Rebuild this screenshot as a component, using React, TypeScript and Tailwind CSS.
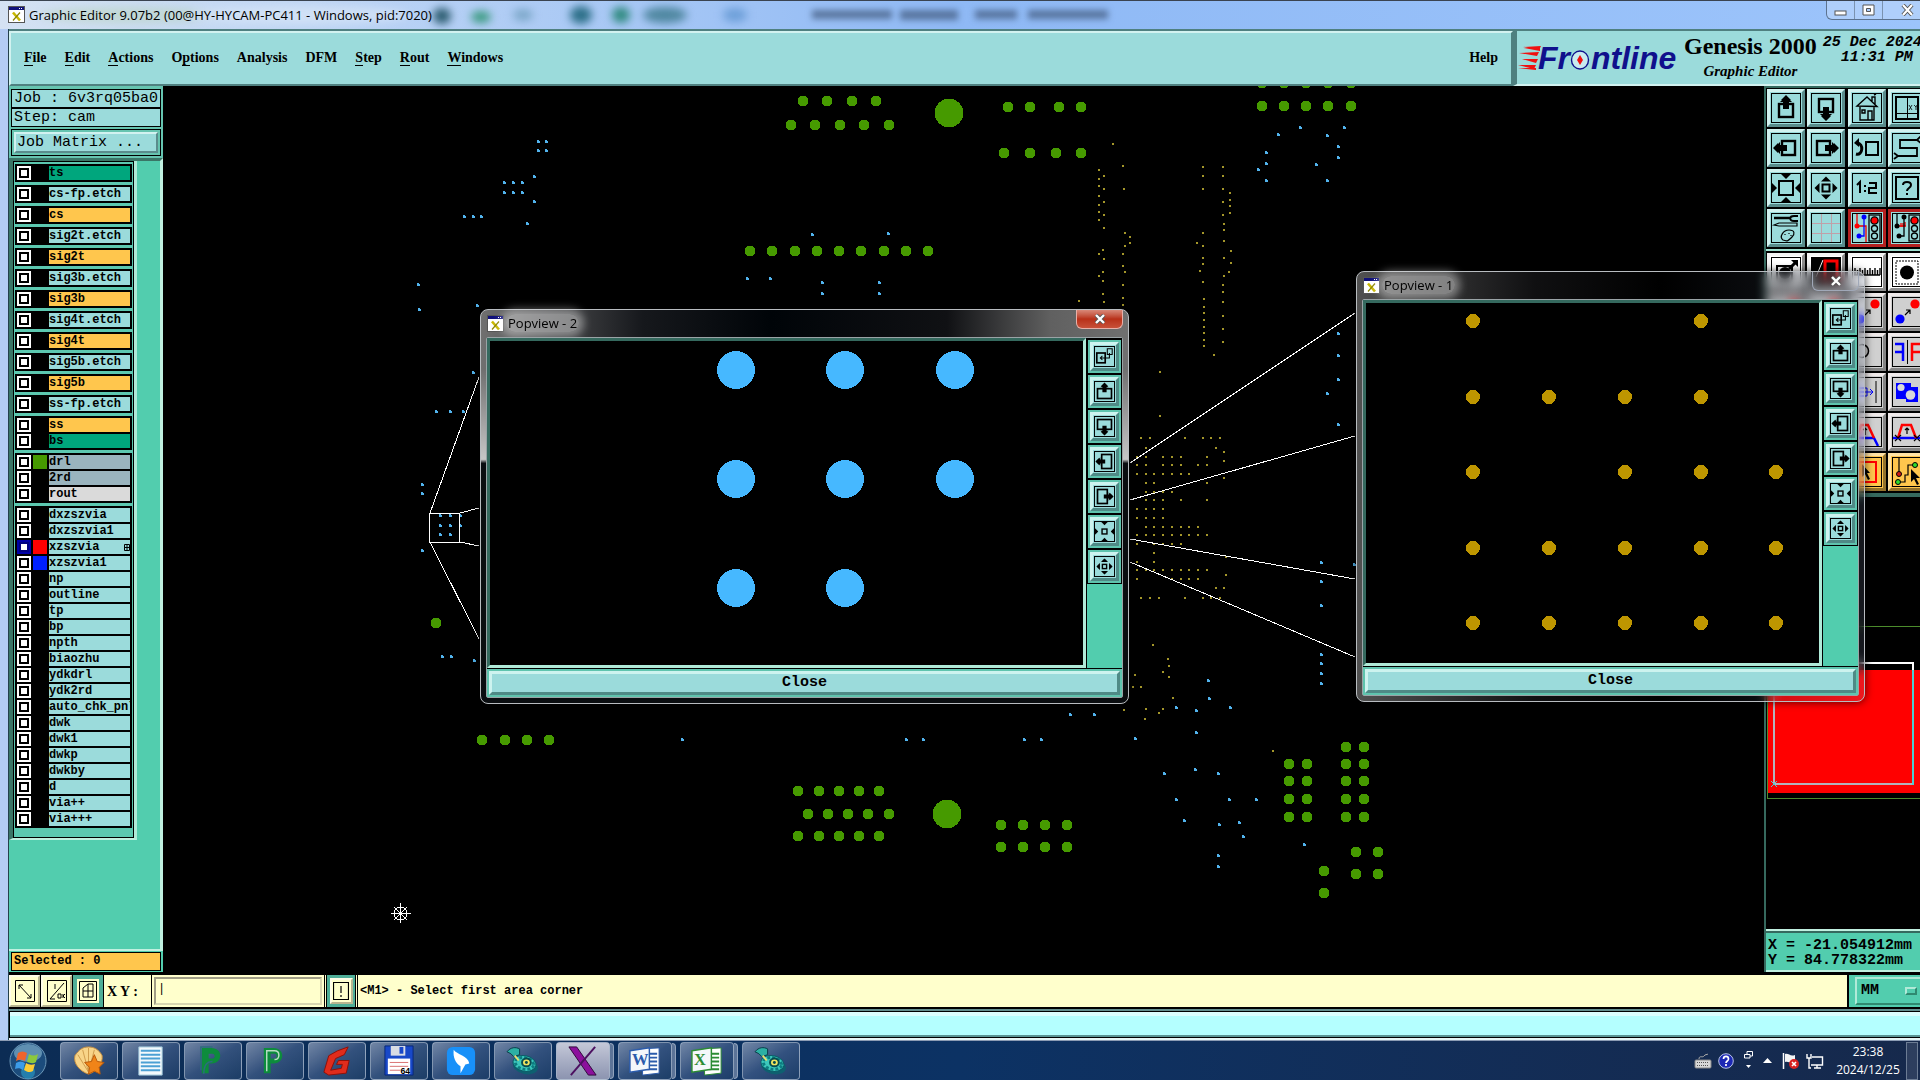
import React from "react";
import clsx from "clsx";

type Point = [number, number];
type Tone = "aqua" | "white" | "grey" | "orange" | "red";

// every entry is [y, ...x] for one row of pads or vias
const greenRows: number[][] = [
  [83, 1262, 1284, 1306, 1328, 1351],
  [101, 803, 827, 852, 876],
  [106, 1262, 1284, 1306, 1328, 1351],
  [107, 1008, 1030, 1059, 1081],
  [125, 791, 815, 840, 864, 889],
  [153, 1004, 1030, 1056, 1081],
  [251, 750, 772, 795, 817, 839, 861, 884, 906, 928],
  [623, 436],
  [740, 482, 505, 527, 549],
  [747, 1346, 1364],
  [764, 1289, 1307, 1346, 1364],
  [781, 1289, 1307, 1346, 1364],
  [799, 1289, 1307, 1346, 1364],
  [817, 1289, 1307, 1346, 1364],
  [791, 798, 819, 839, 859, 879],
  [814, 808, 828, 848, 868, 889],
  [836, 798, 819, 839, 859, 879],
  [825, 1001, 1023, 1045, 1067],
  [847, 1001, 1023, 1045, 1067],
  [852, 1356, 1378],
  [874, 1356, 1378],
  [871, 1324],
  [893, 1324],
];

const blueRows: number[][] = [
  [142, 538, 546], [151, 538, 546], [177, 534], [183, 504, 513, 522], [193, 504, 513, 522],
  [202, 534], [217, 464, 473, 481], [224, 527], [285, 418], [310, 419], [306, 477],
  [235, 812], [234, 888], [279, 747, 770], [283, 822, 879], [294, 822, 879],
  [128, 1300, 1344], [135, 1278], [136, 1327], [147, 1338], [158, 1338], [153, 1266],
  [164, 1266], [170, 1258], [165, 1316], [181, 1266, 1327], [334, 1338], [356, 1338],
  [380, 1338], [394, 1327], [425, 1338], [563, 1321], [565, 1354], [582, 1321],
  [606, 1321], [655, 1321], [664, 1321], [674, 1321], [684, 1321], [681, 1208],
  [699, 1209], [708, 1176, 1230], [711, 1196], [733, 1196], [739, 1135], [774, 1164, 1218],
  [770, 1195], [800, 1176, 1229, 1256], [821, 1184], [825, 1219], [823, 1239], [837, 1243],
  [845, 1304], [856, 1218], [867, 1218], [373, 473], [412, 436, 450, 463], [485, 422],
  [494, 422], [551, 422], [516, 440, 450, 460], [526, 440, 450, 460], [535, 440, 450],
  [657, 442, 451], [661, 474], [740, 682, 906, 923, 1024, 1041], [715, 1070, 1094],
];

const yellowRows: number[][] = [
  [144, 1113], [166, 1123], [170, 1099], [179, 1099], [186, 1099], [196, 1099], [205, 1099],
  [212, 1099], [220, 1099], [254, 1099, 1123], [276, 1099, 1224], [176, 1104, 1203, 1223],
  [189, 1104, 1124, 1203, 1223], [202, 1104, 1223], [215, 1104, 1223], [228, 1104],
  [259, 1104], [302, 1104, 1223], [250, 1103], [272, 1103, 1125, 1229], [281, 1103],
  [294, 1103], [233, 1125, 1203], [246, 1125, 1203], [237, 1130], [243, 1130, 1197],
  [266, 1123], [285, 1123, 1223], [298, 1123], [305, 1123], [301, 1079], [167, 1203, 1223],
  [258, 1203, 1224], [264, 1203], [282, 1203], [271, 1200], [299, 1204], [307, 1204],
  [313, 1204], [320, 1204], [327, 1204], [333, 1204], [340, 1204], [346, 1204], [292, 1223],
  [316, 1223], [329, 1223], [342, 1223], [224, 1224], [230, 1224], [241, 1224], [193, 1230],
  [200, 1230], [206, 1230], [213, 1230], [251, 1231], [263, 1231], [355, 1214], [372, 1160],
  [416, 1160], [438, 1141, 1150, 1185, 1203, 1211, 1220], [448, 1146, 1216], [452, 1224],
  [457, 1137, 1146, 1163, 1172, 1181, 1207], [461, 1224],
  [465, 1137, 1146, 1163, 1172, 1181, 1198, 1207],
  [474, 1137, 1146, 1154, 1163, 1172, 1181, 1189], [478, 1224], [483, 1146, 1154, 1207],
  [492, 1146, 1154, 1163, 1172], [500, 1146, 1154, 1163, 1181, 1207],
  [509, 1137, 1146, 1154, 1163], [518, 1137, 1146, 1154, 1163],
  [527, 1146, 1154, 1163, 1172, 1181, 1189, 1198],
  [535, 1137, 1146, 1154, 1163, 1172, 1181, 1189, 1198, 1207],
  [544, 1137, 1154, 1163, 1172, 1181], [553, 1154], [557, 1226], [562, 1137, 1154],
  [570, 1137, 1146, 1154, 1163, 1172, 1181, 1189, 1198, 1207], [575, 1226],
  [579, 1137, 1172, 1181, 1189, 1198], [588, 1216, 1224],
  [598, 1141, 1150, 1159, 1185, 1203, 1211, 1220], [645, 1153], [659, 1168], [666, 1169],
  [672, 1163], [677, 1169], [675, 1135], [687, 1133, 1141], [698, 1173], [709, 1146, 1163],
  [713, 1159], [719, 1145], [710, 1124], [751, 1273],
];

const spread = (rows: number[][]): Point[] =>
  rows.flatMap(([y, ...xs]) => xs.map((x): Point => [x, y]));

const menus: [string, number][] = [
  ["File", 0],
  ["Edit", 0],
  ["Actions", 0],
  ["Options", 1],
  ["Analysis", -1],
  ["DFM", -1],
  ["Step", 0],
  ["Rout", 0],
  ["Windows", 0],
];

type Layer = { name: string; bg?: string; swatch?: string; active?: boolean };
const green = "bg-[#00a67d]";
const amber = "bg-[#ffc64d]";

const layerGroups: Layer[][] = [
  [{ name: "ts", bg: green }],
  [{ name: "cs-fp.etch" }],
  [{ name: "cs", bg: amber }],
  [{ name: "sig2t.etch" }],
  [{ name: "sig2t", bg: amber }],
  [{ name: "sig3b.etch" }],
  [{ name: "sig3b", bg: amber }],
  [{ name: "sig4t.etch" }],
  [{ name: "sig4t", bg: amber }],
  [{ name: "sig5b.etch" }],
  [{ name: "sig5b", bg: amber }],
  [{ name: "ss-fp.etch" }],
  [{ name: "ss", bg: amber }, { name: "bs", bg: green }],
  [
    { name: "drl", bg: "bg-[#9ab4be]", swatch: "bg-[#469a00]" },
    { name: "2rd", bg: "bg-[#9ab4be]" },
    { name: "rout", bg: "bg-[#dadada]" },
  ],
  [
    { name: "dxzszvia" },
    { name: "dxzszvia1" },
    { name: "xzszvia", swatch: "bg-[#ff0000]", active: true },
    { name: "xzszvia1", swatch: "bg-[#0020ff]" },
    { name: "np" },
    { name: "outline" },
    { name: "tp" },
    { name: "bp" },
    { name: "npth" },
    { name: "biaozhu" },
    { name: "ydkdrl" },
    { name: "ydk2rd" },
    { name: "auto_chk_pnl" },
    { name: "dwk" },
    { name: "dwk1" },
    { name: "dwkp" },
    { name: "dwkby" },
    { name: "d" },
    { name: "via++" },
    { name: "via+++" },
  ],
];

const XLogo = () => (
  <svg width="17" height="17" viewBox="0 0 17 17" className="shrink-0">
    <rect x="0.5" y="0.5" width="16" height="16" fill="#fff" stroke="#555" />
    <rect x="1" y="1" width="15" height="3" fill="#10107a" />
    <path d="M11 2.5h1M13 2.5h1" stroke="#fff" />
    <path d="M5 6.5l7 8" stroke="#c9b800" strokeWidth="2.6" />
    <path d="M12 6.5l-7 8" stroke="#8a8400" strokeWidth="1.2" />
  </svg>
);

// a box with a solid arrow leaving it, turned by `turn` degrees
const PanBox = ({ turn, wide }: { turn: number; wide?: boolean }) => (
  <g transform={`rotate(${turn} 15 15)`}>
    <rect x={wide ? 5 : 8} y="11" width={wide ? 20 : 14} height={wide ? 14 : 13} fill="none" stroke="#000" strokeWidth="2.4" />
    <path d="M15 2l5 5h-1l2 2h-3v7h-6V9H9l2-2h-1z" />
  </g>
);

const Arrows = ({ size, out }: { size: number; out: boolean }) => (
  <>
    <rect x={15 - size / 2} y={15 - size / 2} width={size} height={size} fill="none" stroke="#000" strokeWidth="2" />
    {[0, 90, 180, 270].map((a) => (
      <path key={a} d={out ? "M15 3.5l2 2 3 3h-10l3-3z" : "M10 1h10l-3 3-2 2-2-2z"} transform={`rotate(${a} 15 15)`} />
    ))}
  </>
);

const PopIcon = () => (
  <g fill="none" stroke="#000">
    <rect x="4" y="10" width="12" height="14" strokeWidth="2.4" />
    <path d="M19 4h7v8h-7zM22 10v7H9M12 14l-3 3 3 3" strokeWidth="1.5" />
  </g>
);

const TrafficLight = ({ dark }: { dark?: boolean }) => (
  <g strokeWidth="1.3" stroke="#000" fill="none">
    <rect x="17" y="2" width="11" height="26" />
    <circle cx="22.5" cy="7.5" r="3.6" fill="#f00" />
    <circle cx="22.5" cy="15.5" r="3" />
    <circle cx="22.5" cy="23" r="3" />
    <path d="M5 1v12" stroke={dark ? "#000" : "#e00"} />
    <path d={dark ? "M5 13h9M9 10v4M11 10v4M13 9v4" : "M5 13h9v16"} stroke="#e00" />
    <path d="M12 4v19H7" stroke={dark ? "#000" : "#00f"} />
    <circle cx="5" cy="13" r="2.5" fill={dark ? "#000" : "#f00"} stroke="none" />
    <circle cx="12" cy="4" r="2.5" fill={dark ? "#000" : "#00f"} stroke="none" />
    <circle cx="7" cy="23" r="2.5" fill={dark ? "#000" : "#00f"} stroke="none" />
  </g>
);

const cursor = <path d="M12 9l9 10h-4l3 6-3 1-3-6-3 3z" stroke="none" fill="#000" />;

type Tool = { label: string; tone: Tone; icon: React.ReactNode };

const viewTools: Tool[] = [
  { label: "Pan up", tone: "aqua", icon: <PanBox turn={0} /> },
  { label: "Pan down", tone: "aqua", icon: <PanBox turn={180} /> },
  {
    label: "Home",
    tone: "aqua",
    icon: (
      <path d="M5 13L15 4l10 9.500zM20 8V4h3v7M8 14v13h14V14M10 17h3v3h-3zM16 27v-9h4v9M22 2l2-1" fill="none" stroke="#000" strokeWidth="1.4" />
    ),
  },
  {
    label: "Split view",
    tone: "aqua",
    icon: (
      <g fill="none" stroke="#000">
        <rect x="4" y="4" width="22" height="22" strokeWidth="2" />
        <path d="M15.500 4v22M4 20.500h22" />
        <path d="M17 12l3 5M20 12l-3 5M22 12l2 2 1-2M24 14v3" strokeWidth="0.8" />
      </g>
    ),
  },
  { label: "Pan left", tone: "aqua", icon: <PanBox turn={-90} /> },
  { label: "Pan right", tone: "aqua", icon: <PanBox turn={90} /> },
  {
    label: "Previous view",
    tone: "aqua",
    icon: (
      <g fill="none" stroke="#000">
        <rect x="14" y="9" width="12" height="13" strokeWidth="2" />
        <path d="M4 21c7 2 8-11 1-11" strokeWidth="3" />
        <path d="M2 10l5-5v9z" fill="#000" stroke="none" />
      </g>
    ),
  },
  {
    label: "Snake",
    tone: "aqua",
    icon: <path d="M25 7H8v8h17v8H6M25 7l4-4M25 7l4 3M6 23l-4-3M6 23l-4 3" fill="none" stroke="#000" strokeWidth="1.8" />,
  },
  { label: "Zoom in", tone: "aqua", icon: <Arrows size={14} out={false} /> },
  { label: "Zoom out", tone: "aqua", icon: <Arrows size={7} out /> },
  {
    label: "Scale",
    tone: "aqua",
    icon: <path d="M5 12l3-3v11M13 12v2M13 17v2M17 10h7v5h-7v5h8" fill="none" stroke="#000" strokeWidth="2" />,
  },
  {
    label: "Query",
    tone: "aqua",
    icon: (
      <g fill="none" stroke="#000" strokeWidth="2">
        <rect x="4" y="4" width="22" height="22" />
        <path d="M11 12c0-4 8-4 8 0 0 3-4 3-4 6M15 20v2" />
      </g>
    ),
  },
  {
    label: "Options",
    tone: "aqua",
    icon: (
      <g fill="none" stroke="#000" strokeWidth="1.2">
        <path d="M3 5h16" strokeWidth="2.5" />
        <path d="M27 3h-4c-5 0-5 5 0 5h4" strokeWidth="1.8" />
        <path d="M3 12l5-2h18v3H8z" />
        <path d="M12 27c-4-3 0-10 6-10s6 4 3 7-4 5-9 3zM14 21v1M18 20v1M20 22v1" />
      </g>
    ),
  },
  {
    label: "Grid",
    tone: "aqua",
    icon: <path d="M10.500 1v28M20.500 1v28M1 10.500h28M1 20.500h28" stroke="#c0a0a8" />,
  },
  { label: "DRC on line", tone: "red", icon: <TrafficLight /> },
  { label: "DRC off line", tone: "red", icon: <TrafficLight dark /> },
];

const loop = (
  <g fill="none" strokeWidth="2.5">
    <path d="M1 21h28" stroke="#00f" />
    <path d="M6 21l4-13h9l5 13" stroke="#f00" />
    <path d="M15 17v-6M13 13l2-2 2 2M3 18l6 6M9 18l-6 6M22 18l6 6M28 18l-6 6" stroke="#000" strokeWidth="1.2" />
  </g>
);

const twoDots = (
  <g>
    <circle cx="8" cy="22" r="4.6" fill="#00f" />
    <circle cx="23" cy="7" r="4.6" fill="#f00" />
    <path d="M13 18l5-5M14 13h4v4" fill="none" stroke="#000" strokeWidth="1.2" />
  </g>
);

const editTools: Tool[] = [
  {
    label: "Move feature",
    tone: "white",
    icon: (
      <g>
        <path d="M6 9h15v16H6z" fill="none" stroke="#000" strokeWidth="2" />
        <circle cx="14" cy="16" r="6" />
        <path d="M18 12l6-6" stroke="#000" strokeWidth="3" />
        <path d="M20 3h7v7z" />
      </g>
    ),
  },
  {
    label: "Reference layer",
    tone: "white",
    icon: (
      <g>
        <path d="M1 1h28v28H1z" />
        <path d="M5 20L12 3" stroke="#fff" />
        <path d="M14 25V4h12v21" fill="none" stroke="#f00" strokeWidth="3" />
      </g>
    ),
  },
  {
    label: "Measure",
    tone: "white",
    icon: <path d="M2 18h26M3 11v7M5.500 13v5M8 11v7M10.500 13v5M13 11v7M15.500 13v5M18 11v7M20.500 13v5M23 11v7M25.500 13v5M28 11v7" stroke="#000" strokeWidth="1.4" />,
  },
  {
    label: "Select pad",
    tone: "white",
    icon: (
      <g>
        <rect x="4" y="4" width="22" height="23" fill="none" stroke="#000" strokeDasharray="2 1" />
        <circle cx="15" cy="15.5" r="7" />
      </g>
    ),
  },
  { label: "Add", tone: "grey", icon: twoDots },
  { label: "Copy", tone: "grey", icon: twoDots },
  { label: "Move", tone: "grey", icon: twoDots },
  { label: "Stretch", tone: "grey", icon: twoDots },
  { label: "Rotate", tone: "grey", icon: loop },
  { label: "Change", tone: "grey", icon: twoDots },
  { label: "Arc", tone: "grey", icon: <circle cx="10" cy="14" r="6.5" fill="none" stroke="#000" strokeWidth="1.5" /> },
  {
    label: "Mirror",
    tone: "grey",
    icon: (
      <g fill="none" strokeWidth="2.5">
        <path d="M3 7h8v17M3 15h8" stroke="#00f" />
        <path d="M28 7h-8v17M28 15h-8" stroke="#f00" />
        <path d="M15.500 3v24" stroke="#000" strokeWidth="1" />
      </g>
    ),
  },
  { label: "Scale feature", tone: "grey", icon: twoDots },
  { label: "Resize", tone: "grey", icon: loop },
  {
    label: "Align",
    tone: "grey",
    icon: (
      <g fill="none" stroke="#00f">
        <path d="M6 11h9v8H6zM3 15h18M18 12l3 3-3 3" />
        <path d="M24 4v22" stroke="#000" />
      </g>
    ),
  },
  {
    label: "Merge",
    tone: "grey",
    icon: (
      <g fill="#00f">
        <path d="M4 6h15v4h7v15H14v-3H4z" />
        <circle cx="9" cy="10.5" r="3.6" fill="#dadada" />
        <circle cx="18.5" cy="18" r="4.8" fill="#dadada" />
      </g>
    ),
  },
  { label: "Line", tone: "grey", icon: loop },
  { label: "Surface", tone: "grey", icon: loop },
  {
    label: "Bend",
    tone: "grey",
    icon: (
      <g fill="none" strokeWidth="2.5">
        <path d="M2 21h20l4 8" stroke="#00f" />
        <path d="M4 21L9 8h7l6 13" stroke="#f00" />
        <path d="M13 18v-7M11 13l2-2 2 2" stroke="#000" strokeWidth="1.2" />
      </g>
    ),
  },
  { label: "Offset", tone: "grey", icon: loop },
  { label: "Pick one", tone: "orange", icon: cursor },
  { label: "Pick chain", tone: "orange", icon: cursor },
  {
    label: "Pick area",
    tone: "orange",
    icon: (
      <g>
        <path d="M5 5h19v20H5z" fill="none" stroke="#f00" strokeWidth="2" />
        <path d="M10 7l8 9h-3l3 6-2 1-3-6-3 3z" />
      </g>
    ),
  },
  {
    label: "Pick net",
    tone: "orange",
    icon: (
      <g stroke="#000" fill="none">
        <path d="M7 1v15M6 25h7v-7h3V8h7" strokeWidth="1.2" />
        <circle cx="7" cy="17" r="2.5" fill="#d01818" />
        <circle cx="6" cy="25" r="2.5" fill="#2ddc2d" />
        <circle cx="23" cy="8" r="2.5" fill="#2ddc2d" />
        <path d="M19 12l9 9h-4l3 6-2 1-3-6-3 3z" fill="#000" stroke="none" />
      </g>
    ),
  },
];

const tones: Record<Tone, string> = {
  aqua: "bg-[#9bdbdb] border-t-[#d2f2f0] border-l-[#d2f2f0] border-b-[#5a8c8c] border-r-[#5a8c8c]",
  white: "bg-white border-t-[#f4f4f4] border-l-[#f4f4f4] border-b-[#8d8d8d] border-r-[#8d8d8d]",
  grey: "bg-[#d0d0d0] border-t-[#f0eaea] border-l-[#f0eaea] border-b-[#858585] border-r-[#858585]",
  orange: "bg-[#ffc64d] border-t-[#ffe3a6] border-l-[#ffe3a6] border-b-[#94732c] border-r-[#94732c]",
  red: "bg-[#9bdbdb] border-[#b52020]",
};

const ToolButton = ({ label, tone, icon }: Tool) => (
  <button aria-label={label} className={clsx("h-[38px] w-[38px] shrink-0 border-[3px] p-px", tones[tone])}>
    <svg viewBox="0 0 30 30" className="h-[30px] w-[30px]">
      {icon}
      <rect x="0.5" y="0.5" width="29" height="29" fill="none" stroke="#000" />
    </svg>
  </button>
);

const bevel = "border-[3px] border-t-[#cdf3ef] border-l-[#cdf3ef] border-b-[#4f8a86] border-r-[#4f8a86] bg-[#9bdbdb]";

const popTools: [string, React.ReactNode][] = [
  ["Pop view", <PopIcon />],
  ["Up", <PanBox turn={0} wide />],
  ["Down", <PanBox turn={180} wide />],
  ["Left", <PanBox turn={-90} wide />],
  ["Right", <PanBox turn={90} wide />],
  ["Zoom in", <Arrows size={7} out={false} />],
  ["Zoom out", <Arrows size={6} out />],
];

type PopviewProps = {
  title: string;
  className: string;
  closeClass: string;
  dots: Point[];
  radius: number;
  color: string;
};

const Popview = ({ title, className, closeClass, dots, radius, color }: PopviewProps) => (
  <section
    className={clsx(
      "absolute flex flex-col rounded-lg border border-[#b8bcc0] px-[5px] pb-[5px] shadow-[0_0_8px_rgba(0,0,0,0.7)] backdrop-blur-[5px]",
      className
    )}
  >
    <header className="flex h-[27px] shrink-0 items-start pl-px">
      <h2 className="mt-1 flex items-center gap-[2px] font-['Open_Sans',sans-serif] text-[13px] leading-[18px] text-black">
        <XLogo />
        <span className="rounded-full bg-white/40 px-[2px] shadow-[0_0_8px_5px_rgba(255,255,255,0.4)]">{title}</span>
      </h2>
      <button
        aria-label={`Close ${title}`}
        className={clsx("ml-auto flex h-[19px] w-[47px] items-center justify-center rounded-b-md border border-t-0", closeClass)}
      >
        <svg width="12" height="10" viewBox="0 0 12 10">
          <path d="M2 1l8 8M10 1l-8 8" stroke="#555" strokeWidth="4" />
          <path d="M2 1l8 8M10 1l-8 8" stroke="#fff" strokeWidth="2.4" />
        </svg>
      </button>
    </header>
    <div className="flex flex-1 flex-col rounded-xs border border-[#9aa3a6] bg-black">
      <div className="flex flex-1">
        <div className="flex-1 border-[3px] border-t-[#35695e] border-r-[#b0ead8] border-b-[#b0ead8] border-l-[#35695e] bg-black">
          <svg className="block h-full w-full">
            {dots.map(([x, y]) => (
              <circle key={`${x}-${y}`} cx={x} cy={y} r={radius} fill={color} shapeRendering="crispEdges" />
            ))}
          </svg>
        </div>
        <div className="ml-px flex w-[35px] flex-col bg-[#52cdae]">
          <div className="flex flex-col gap-[2px] bg-black px-px pt-[2px] pb-px">
            {popTools.map(([label, icon]) => (
              <button key={label} aria-label={label} className="h-[33px] w-[33px] border-2 border-[#5fc4ae]">
                <span className={clsx("flex h-[29px] w-[29px] items-center justify-center", bevel)}>
                  <svg viewBox="0 0 30 30" className="h-[21px] w-[21px]">
                    {icon}
                    <rect x="0.7" y="0.7" width="28.6" height="28.6" fill="none" stroke="#000" strokeWidth="1.4" />
                  </svg>
                </span>
              </button>
            ))}
          </div>
        </div>
      </div>
      <button
        className="mt-px h-[28px] shrink-0 border-2 border-[#5fc4ae] font-['Liberation_Mono',monospace] text-[15px] leading-[18px] font-bold text-black"
      >
        <span className={clsx("flex h-6 items-center justify-center", bevel)}>Close</span>
      </button>
    </div>
  </section>
);

const grid = (xs: number[], ys: number[], skip: string[]): Point[] =>
  ys
    .flatMap((y, r) => xs.map((x, c) => ({ x, y, id: `${r}${c}` })))
    .filter((d) => !skip.includes(d.id))
    .map((d): Point => [d.x, d.y]);

const TitleBar = () => (
  <header className="relative flex h-[29px] shrink-0 items-center overflow-hidden border-t border-[#3a4350] bg-linear-to-r from-[#d5e2f3] via-[#8fb9f5] to-[#9cc4fb]">
    <svg className="absolute inset-0 h-full w-full">
      <g style={{ filter: "blur(4px)" }}>
        <ellipse cx="130" cy="14" rx="90" ry="8" fill="#b8d3b8" opacity="0.5" />
        <ellipse cx="300" cy="14" rx="110" ry="9" fill="#d5e4f6" opacity="0.8" />
        <ellipse cx="442" cy="15" rx="9" ry="8" fill="#2c5c70" />
        <ellipse cx="481" cy="16" rx="10" ry="6" fill="#3a9a80" />
        <ellipse cx="523" cy="14" rx="10" ry="6" fill="#7ba7c8" />
        <ellipse cx="581" cy="14" rx="11" ry="9" fill="#2c6f88" />
        <ellipse cx="621" cy="14" rx="9" ry="8" fill="#2f8a80" />
        <ellipse cx="665" cy="14" rx="22" ry="8" fill="#4f87a0" />
        <ellipse cx="735" cy="14" rx="12" ry="7" fill="#6d9fd8" />
      </g>
      <g style={{ filter: "blur(3px)" }} fill="#40587c">
        <path d="M812 9h80v9h-80zM900 9h58v10h-58zM975 9h42v9h-42zM1028 9h80v9h-80z" opacity="0.7" />
      </g>
    </svg>
    <h1 className="relative flex items-center gap-1 pb-px pl-2 font-['Open_Sans',sans-serif] text-[13px] leading-[18px] text-black">
      <XLogo />
      <span>Graphic Editor 9.07b2 (00@HY-HYCAM-PC411 - Windows, pid:7020)</span>
    </h1>
    <div className="relative -mr-3 ml-auto flex h-[19px] self-start rounded-b-md border border-t-0 border-[#5c7390] bg-white/20">
      <button aria-label="Minimize" className="flex w-7 items-center justify-center border-r border-[#7b93b0]">
        <svg width="13" height="12"><rect x="1" y="7" width="11" height="4" fill="#fff" stroke="#555" /></svg>
      </button>
      <button aria-label="Maximize" className="flex w-7 items-center justify-center border-r border-[#7b93b0]">
        <svg width="13" height="12"><path d="M1 1h11v10H1zM4.500 4.500v3h4v-3z" fill="#fff" fillRule="evenodd" stroke="#555" /></svg>
      </button>
      <button aria-label="Close" className="flex w-12 items-center justify-center">
        <svg width="13" height="12">
          <path d="M2 1l9 10M11 1L2 11" stroke="#555" strokeWidth="4" />
          <path d="M2 1l9 10M11 1L2 11" stroke="#fff" strokeWidth="2.2" />
        </svg>
      </button>
    </div>
  </header>
);

const MenuBar = () => (
  <div className="flex h-[57px] shrink-0 border-t-2 border-[#4f8080] bg-[#9bdbdb] font-['Liberation_Serif',serif] font-bold">
    <nav className="flex flex-1 items-center gap-[18px] border-2 border-t-[#d2f2f0] border-r-[#4f8080] border-b-[#4f8080] border-l-[#d2f2f0] px-[13px] pb-[2px] text-[14px] leading-[18px]">
      {menus.map(([name, mark]) => (
        <button key={name} className="font-bold">
          {mark < 0 ? name : (
            <>
              {name.slice(0, mark)}
              <span className="border-b border-black">{name[mark]}</span>
              {name.slice(mark + 1)}
            </>
          )}
        </button>
      ))}
      <button className="ml-auto font-bold">Help</button>
    </nav>
    <div className="flex w-[407px] shrink-0 border-b-2 border-l-4 border-b-[#d2f2f0] border-l-[#4f8080]">
      <svg width="164" height="52" viewBox="0 0 164 52" className="ml-px shrink-0" aria-label="Frontline">
        <path d="M5 16l18-1-2 4zM1 22l20-1-2 4zM4 28l16 0-2 4zM0 34l18 0-2 4zM6 17h16v3zM0 37h18v2z" fill="#f01010" />
        <g fill="#10108c" fontFamily="Liberation Sans" fontWeight="700" fontStyle="italic" fontSize="32">
          <text x="20" y="38">Fr</text>
          <text x="73" y="38">ntline</text>
        </g>
        <ellipse cx="62" cy="29" rx="8.5" ry="9" fill="#c8ebef" stroke="#10108c" strokeWidth="1.4" />
        <path d="M62 24l3 5-3 5-3-5z" fill="#f01010" />
      </svg>
      <div className="ml-[2px] shrink-0 pt-[2px] text-center whitespace-nowrap">
        <p className="text-[24px] leading-[26px]">Genesis 2000</p>
        <p className="pt-px text-[15px] leading-[22px] italic">Graphic Editor</p>
      </div>
      <p className="ml-[6px] shrink-0 pt-1 font-['Liberation_Mono',monospace] text-[15px] leading-[15px] whitespace-pre italic">
        {"25 Dec 2024\n  11:31 PM"}
      </p>
    </div>
  </div>
);

const LayerRow = ({ name, bg, swatch, active }: Layer) => (
  <li className="flex h-[14px] gap-[2px]">
    <input
      type="checkbox"
      aria-label={name}
      className={clsx(
        "h-[14px] w-[14px] appearance-none border-2 bg-white",
        active ? "border-[#0000a8] shadow-[inset_0_0_0_2px_#000080]" : "border-white shadow-[inset_0_0_0_2px_black]"
      )}
    />
    <span className={clsx("w-[14px]", swatch)}></span>
    <span className={clsx("flex flex-1 items-center overflow-hidden", bg ?? "bg-[#9bdbdb]")}>
      {name}
      {active && (
        <svg width="6" height="7" className="ml-auto">
          <path d="M0.500 0.500h5v6h-5zM3 0v7M0 3.500h6" fill="none" stroke="#000" />
        </svg>
      )}
    </span>
  </li>
);

const Sidebar = () => (
  <aside className="flex w-[154px] shrink-0 flex-col bg-[#52cdae] font-['Liberation_Mono',monospace] text-black">
    <div className="bg-[#66c4b0] px-[2px] pt-[3px] pb-[2px] text-[15px] leading-[17px]">
      <p className="overflow-hidden border border-black bg-[#9bdbdb] pl-[2px] whitespace-pre">Job : 6v3rq05ba0</p>
      <p className="border border-black bg-[#9bdbdb] pl-[2px]">Step: cam</p>
      <div className="mt-[2px] border border-black p-[2px]">
        <button className="block h-[21px] w-full border-2 border-t-[#d2f2f0] border-r-[#5a8c8c] border-b-[#5a8c8c] border-l-[#d2f2f0] bg-[#9bdbdb] pl-px text-left leading-[17px]">
          Job Matrix ...
        </button>
      </div>
    </div>
    <div className="flex flex-1 items-start border-t-[3px] border-r-[3px] border-b-2 border-t-[#3a7566] border-r-[#c0f0e0] border-b-[#c0f0e0]">
      <div className="border-r-[3px] border-b-2 border-l-4 border-r-[#b0ead8] border-b-[#c0f0e0] border-l-[#3a7566]">
        <div className="flex w-[121px] flex-col gap-[3px] border border-black bg-[#5cc8b0] pt-[2px] pr-px pb-[9px] pl-px text-[12px] leading-[14px] font-bold">
          {layerGroups.map((group) => (
            <ul key={group[0].name} className="flex flex-col gap-[2px] bg-black p-[2px]">
              {group.map((layer) => (
                <LayerRow key={layer.name} {...layer} />
              ))}
            </ul>
          ))}
        </div>
      </div>
    </div>
    <p className="mx-[2px] mt-px mb-px border border-black bg-[#ffc64d] pl-[2px] text-[12px] leading-[17px] font-bold">Selected : 0</p>
  </aside>
);

const Board = () => (
  <main className="min-w-0 flex-1 bg-black">
    <svg className="block h-full w-full">
      {/* coordinates are those of the whole screen */}
      <g transform="translate(-163 -86)" shapeRendering="crispEdges">
        {spread(greenRows).map(([x, y]) => (
          <circle key={`${x}-${y}`} cx={x} cy={y} r="5.3" fill="#469a00" />
        ))}
        <circle cx="949" cy="113" r="14.3" fill="#469a00" />
        <circle cx="947" cy="814" r="14.3" fill="#469a00" />
        {spread(blueRows).map(([x, y]) => (
          <path key={`${x}-${y}`} d={`M${x - 1} ${y - 2}h2v1h1v2h-3z`} fill="#52b4ee" />
        ))}
        {spread(yellowRows).map(([x, y]) => (
          <rect key={`${x}-${y}`} x={x - 1} y={y - 1} width="2" height="2" fill="#a4962a" />
        ))}
        <g fill="none" stroke="#fff">
          <path d="M429.500 513.500h30v29h-30zM430 513L479 377M460 513l19-5M460 542l19 4M430 542l49 97" />
          <path d="M1130 463L1355 313M1130 500L1355 436M1130 539L1355 579M1130 562L1355 657" />
          <path d="M400.500 903v20M390.500 913.500h20M394 907l13 13M407 907l-13 13" />
          <circle cx="400.5" cy="913.5" r="6.5" />
        </g>
      </g>
    </svg>
  </main>
);

const ToolColumn = () => (
  <aside className="flex w-[156px] shrink-0 flex-col overflow-hidden border-l-2 border-[#35695e] bg-black">
    <div className="flex shrink-0 flex-col border-t-2 border-[#35695e]">
      <div className="grid w-[160px] grid-cols-4 gap-[2px] border-b-2 border-[#9fe0d0] pt-px pb-[2px] pl-px">
        {viewTools.map((t) => (
          <ToolButton key={t.label} {...t} />
        ))}
      </div>
      <div className="grid w-[160px] grid-cols-4 gap-[2px] border-b-4 border-[#35695e] pt-[2px] pb-[2px] pl-px">
        {editTools.map((t) => (
          <ToolButton key={t.label} {...t} />
        ))}
      </div>
    </div>
    <svg className="block w-full flex-1">
      <g transform="translate(-1766 -497)" shapeRendering="crispEdges">
        <rect x="1767" y="670" width="153" height="123" fill="#f00" />
        <path d="M1766 626.500h154M1767.500 626v172h153" fill="none" stroke="#4c8c2c" />
        <path d="M1774 663h139v7" fill="none" stroke="#fff" strokeWidth="2" />
        <path d="M1774 663v121h139" fill="none" stroke="#b4b4bc" strokeWidth="2" />
        <path d="M1913 670v115" stroke="#4ccfd4" strokeWidth="2" />
        <path d="M1771 781l6 6M1777 781l-6 6" stroke="#4ccfd4" />
      </g>
    </svg>
    <div className="h-[43px] shrink-0 border-t-2 border-b-2 border-[#c0f0e0] bg-[#52cdae]">
      <p className="border-t-2 border-[#35695e] pt-[5px] pl-[2px] font-['Liberation_Mono',monospace] text-[15px] leading-[15px] font-bold whitespace-pre">
        {"X = -21.054912mm\nY = 84.778322mm"}
      </p>
    </div>
  </aside>
);

const creamKey = "flex h-[32px] w-[31px] items-center justify-center border-2 border-[#fffde8] border-r-[#b8b590] border-b-[#b8b590] bg-[#ffffcc]";

const StatusBar = () => (
  <footer className="shrink-0 bg-black pt-[3px] font-['Liberation_Mono',monospace] text-[12px] font-bold">
    <div className="flex h-[32px] bg-[#ffffcc]">
      <div className="flex gap-px bg-black pr-px">
        <button aria-label="Snap off" className={creamKey}>
          <svg width="20" height="22"><path d="M0.500 0.500h19v21h-19zM4 5l12 13M4 9V5h4M16 14v4h-4" fill="none" stroke="#000" /></svg>
        </button>
        <button aria-label="Angle" className={creamKey}>
          <svg width="20" height="22"><path d="M0.500 0.500h19v21h-19zM3 19L17 3M3 19h5M8 4v5M11 14v4h3v-4zM16 14v4M18 14l-2 2 2 2" fill="none" stroke="#000" /></svg>
        </button>
        <button aria-label="Snap grid" className="flex h-[32px] w-[30px] items-center justify-center border-4 border-[#4fae98] bg-[#ffffcc]">
          <svg width="18" height="20"><path d="M0.500 0.500h17v19h-17zM4 7l5-4h5v13H4zM9 3v13M4 10h10" fill="none" stroke="#000" /></svg>
        </button>
      </div>
      <label htmlFor="xy" className="w-[47px] self-center pl-[3px] font-['Liberation_Serif',serif] text-[14px] whitespace-pre">X Y :</label>
      <div className="border-x border-black p-[2px]">
        <input
          id="xy"
          type="text"
          className="block h-[28px] w-[168px] border-2 border-t-[#a09d85] border-r-[#d8d6b0] border-b-[#d8d6b0] border-l-[#a09d85] bg-[#ffffcc] px-[2px] pb-1 font-normal outline-none"
          defaultValue="|"
        />
      </div>
      <button aria-label="Warnings" className="mx-px flex w-[30px] items-center justify-center border-x border-black bg-[#4fae98]">
        <span className="flex h-[26px] w-[23px] items-center justify-center border-2 border-[#fffde8] border-r-[#b8b590] border-b-[#b8b590] bg-[#ffffcc]">
          <svg width="16" height="18"><path d="M0.500 0.500h15v17h-15zM8 4v7M8 13v2" fill="none" stroke="#000" strokeWidth="1.2" /></svg>
        </span>
      </button>
      <p className="flex flex-1 items-center border-l border-black pl-[2px] whitespace-pre">{"<M1> - Select first area corner"}</p>
      <div className="relative w-[73px] shrink-0 overflow-hidden border-l-2 border-black bg-[#52cdae] py-[2px] pl-[6px]">
        <select
          aria-label="Units"
          className="block h-[28px] w-[80px] appearance-none border-2 border-t-[#b0ead8] border-r-[#2f8a70] border-b-[#2f8a70] border-l-[#b0ead8] bg-[#52cdae] pl-1 text-[15px] font-bold"
        >
          <option>MM</option>
        </select>
        <span className="pointer-events-none absolute top-[12px] right-[3px] h-[8px] w-[12px] border-2 border-t-[#b0ead8] border-r-[#2f8a70] border-b-[#2f8a70] border-l-[#b0ead8]"></span>
      </div>
    </div>
    <div className="mt-[2px] border-t-2 border-[#648f8f] pt-px">
      <div className="ml-px h-[25px] border-t-4 border-b-2 border-t-[#dcffff] border-b-[#5a9494] bg-[#b4ffff]"></div>
      <div className="mt-px h-[2px] bg-[#e6f6f6]"></div>
    </div>
  </footer>
);

const pen = (
  <path d="M6 30V4h10c12 0 12 16 0 16h-3v10zM13 10v5h4c3 0 3-5 0-5z" fill="#0d8c3c" fillRule="evenodd" />
);

const disc = (
  <g>
    <ellipse cx="20" cy="23" rx="13" ry="8" fill="#0e6070" transform="rotate(12 20 23)" />
    <ellipse cx="19" cy="20" rx="12" ry="8" fill="#3cc8bc" stroke="#0c5c68" transform="rotate(12 19 20)" />
    <ellipse cx="19" cy="20" rx="9.5" ry="6" fill="none" stroke="#0c7c80" strokeWidth="3" strokeDasharray="3 2" transform="rotate(12 19 20)" />
    <ellipse cx="21" cy="19" rx="4.5" ry="4" fill="#f0e460" stroke="#084c50" strokeWidth="2" />
    <circle cx="21" cy="19" r="1.5" fill="#084c50" />
    <path d="M1 8c4-5 9-5 13-3v6l-6 2-3-3z" fill="#2cb0a4" stroke="#083c48" />
    <path d="M9 12l4 5" stroke="#e8e070" strokeWidth="2" />
  </g>
);

const office = (color: string, mark: string) => (
  <g>
    <path d="M15 5l17-1v26l-17 2z" fill="#fff" stroke={color} />
    <path d="M20 10h10M20 14h10M20 18h10M20 22h10M20 26h10" stroke={color} strokeWidth="2" />
    <path d="M2 7l20-3v22L2 29z" fill="#f4f7fa" stroke={color} strokeWidth="1.5" />
    <text x="4" y="22" fontSize="17" fontWeight="700" fontFamily="Liberation Serif" fill={color}>{mark}</text>
  </g>
);

type TaskApp = { label: string; icon: React.ReactNode; state?: "active" | "stack" };

const apps: TaskApp[] = [
  {
    label: "Shell",
    icon: (
      <g>
        <path d="M17 31C8 28 1 20 3 12 7 6 11 3 17 3s11 3 14 9c1 8-5 16-14 19z" fill="#f8d488" stroke="#c89040" />
        <path d="M17 29L6 11M17 29L11 6M17 29V4M17 29L23 6" stroke="#d09c4c" />
        <path d="M23 11l3 7 7 1-5 5 1 7-6-3-6 3 1-7-5-5 7-1z" fill="#f08418" stroke="#b85808" />
      </g>
    ),
  },
  {
    label: "Notepad",
    icon: (
      <g>
        <path d="M5 3h24v29H5z" fill="#f4fafd" stroke="#9cc4d8" />
        <path d="M7 7h20M7 11h20M7 15h20M7 19h20M7 23h20M7 27h20" stroke="#4ca0d4" strokeWidth="2" />
      </g>
    ),
  },
  {
    label: "Genesis tool",
    icon: (
      <g>
        {pen}
        <path d="M5 27V3h12M8 31c0-9 3-13 9-13" fill="none" stroke="#2c6c7c" strokeWidth="1.5" />
      </g>
    ),
  },
  {
    label: "Genesis scripts",
    icon: (
      <g>
        {pen}
        <path d="M9 28V7h8c6 0 6 9 0 9" fill="none" stroke="#b8dcc4" strokeWidth="1.5" />
      </g>
    ),
  },
  {
    label: "Genesis",
    icon: <path d="M29 3l-4 8-9 4-5 12 11-2 1-4h-6l2-4h11l-3 13-18 2-5-3 5-17 9-5z" fill="#e02c1c" stroke="#901008" />,
  },
  {
    label: "Floppy 64",
    icon: (
      <g>
        <path d="M3 2h29v30H3z" fill="#1848c8" stroke="#082878" />
        <path d="M9 2h15v10H9z" fill="#d8dce4" />
        <path d="M18 3h4v7h-4z" fill="#1848c8" />
        <path d="M6 15h23v16H6z" fill="#fff" />
        <path d="M8 19h19M8 23h19M8 27h11" stroke="#d87070" />
        <text x="19" y="31" fontSize="9" fontFamily="Liberation Sans" fontWeight="700">64</text>
      </g>
    ),
  },
  {
    label: "Messenger",
    icon: (
      <g>
        <rect x="3" y="3" width="29" height="29" rx="6" fill="#1890f8" />
        <path d="M10 6c3 5 15 6 16 14l-4 1-5 9v-7c-5-3-8-9-7-17z" fill="#fff" />
      </g>
    ),
  },
  { label: "Disc view", icon: disc },
  {
    label: "X server",
    state: "active",
    icon: (
      <g>
        <path d="M3 3h8l20 29h-8z" fill="#8c109c" stroke="#30083c" />
        <path d="M30 3L5 32" stroke="#4c1060" strokeWidth="2" />
      </g>
    ),
  },
  { label: "Word", state: "stack", icon: office("#2c5cac", "W") },
  { label: "Excel", state: "stack", icon: office("#2c8c34", "X") },
  { label: "Disc scan", icon: disc },
];

const Taskbar = () => (
  <nav className="flex h-10 shrink-0 items-center gap-1 overflow-hidden border-t border-[#8c9cb4] bg-linear-to-r from-[#0c2c54] via-[#0c3264] to-[#16294c]">
    <button aria-label="Start" className="flex w-[56px] justify-center">
      <svg width="38" height="38" viewBox="0 0 38 38">
        <circle cx="19" cy="19" r="18" fill="#1c4c7c" stroke="#6c98b8" />
        <ellipse cx="19" cy="11" rx="14" ry="9" fill="#7cacc8" opacity="0.7" />
        <circle cx="19" cy="30" r="7" fill="#2cb0dc" opacity="0.5" />
        <path d="M9 11c3-2 6-2 9 0l-2 8c-3-2-6-2-9 0z" fill="#f0642c" />
        <path d="M20 12c3 2 6 2 9 0l-2 8c-3 2-6 1-9 0z" fill="#8cc83c" />
        <path d="M7 21c3-2 6-2 9 0l-2 7c-3-2-5-2-8-1z" fill="#3c9ce8" />
        <path d="M17 21c3 2 6 2 9 1l-2 7c-3 2-6 1-9-1z" fill="#fccc34" />
      </svg>
    </button>
    {apps.map(({ label, icon, state }) => (
      <div key={label} className="flex h-[38px] w-[58px]">
        <button
          aria-label={label}
          className={clsx(
            "flex flex-1 items-center justify-center rounded-sm border border-[#a8b8cc]/70",
            state === "active"
              ? "bg-linear-to-b from-[#c4c8d8] to-[#8c94b0]"
              : "bg-linear-to-br from-[#8c9cb8]/80 via-[#44608c]/70 to-[#24446c]/70"
          )}
        >
          <svg width="34" height="34" viewBox="0 0 35 35">{icon}</svg>
        </button>
        {state && <span className="my-px w-1 rounded-r-sm border border-l-0 border-[#a8b8cc]/70 bg-[#5c7498]"></span>}
      </div>
    ))}
    <div className="ml-auto flex items-center gap-[6px]">
      <svg width="18" height="16" viewBox="0 0 18 16">
        <rect x="1" y="7" width="16" height="8" rx="1" fill="#d8d8d8" stroke="#888" />
        <path d="M3 9.500h12M3 12.500h12" stroke="#555" strokeDasharray="1 1" />
        <path d="M5 6c0-4 4-1 5-3s3-1 4-2" fill="none" stroke="#aaa" />
      </svg>
      <svg width="16" height="16" viewBox="0 0 16 16" className="mr-1">
        <circle cx="8" cy="8" r="7.3" fill="#1c28b4" stroke="#b8c4e8" />
        <path d="M5.500 6c0-3.500 5-3.500 5 0 0 2-2.500 2-2.500 4M8 11v2" fill="none" stroke="#fff" strokeWidth="1.7" />
      </svg>
      <svg width="9" height="20" viewBox="0 0 9 20">
        <path d="M3 3V0.500h5.500V5H6M0.500 3.500H6V7H0.500z" fill="none" stroke="#fff" />
        <path d="M2 14h5l-2.500 3z" fill="#fff" />
      </svg>
      <svg width="9" height="5" className="mx-1"><path d="M0 5L4.500 0 9 5z" fill="#fff" /></svg>
      <svg width="18" height="18" viewBox="0 0 18 18">
        <path d="M1.500 1v16" stroke="#fff" strokeWidth="1.5" />
        <path d="M3 2c4-1 5 3 10 1v7c-5 2-6-1-10 0z" fill="#f4f4f4" />
        <circle cx="12" cy="12" r="5" fill="#d82020" />
        <path d="M10 10l4 4M14 10l-4 4" stroke="#fff" strokeWidth="1.6" />
      </svg>
      <svg width="18" height="16" viewBox="0 0 18 16" className="mr-1">
        <path d="M6 4h10.500v8H5M8 15h7M11 12v3M1 1v4h4V1M3 5v10h2" fill="none" stroke="#fff" strokeWidth="1.4" />
      </svg>
      <p className="w-[68px] text-center font-['Open_Sans',sans-serif] text-[12px] leading-[18px] text-white">
        23:38
        <br />
        2024/12/25
      </p>
    </div>
    <button aria-label="Show desktop" className="mr-[2px] h-[38px] w-[12px] border border-[#6c7c94] bg-white/10"></button>
  </nav>
);

const App = () => {
  return (
    <div className="relative flex min-h-screen flex-col overflow-hidden bg-black text-black">
      <TitleBar />
      <div className="flex flex-1 flex-col border-l-[8px] border-[#b4ccf4]">
        <div className="flex flex-1 flex-col border-l border-[#24404c]">
          <MenuBar />
          <div className="flex flex-1">
            <Sidebar />
            <Board />
            <ToolColumn />
          </div>
          <StatusBar />
        </div>
      </div>
      <Taskbar />
      <Popview
        title="Popview - 1"
        className="top-[271px] left-[1356px] h-[431px] w-[509px] bg-[linear-gradient(90deg,rgba(90,90,90,0.9)_0%,rgba(20,20,22,0.8)_35%,rgba(0,0,0,0.3)_60%,rgba(140,160,200,0.15)_100%)]"
        closeClass="border-[#a0a8b8] bg-white/10"
        dots={grid([107, 183, 259, 335, 410], [18, 94, 169, 245, 320], ["01", "02", "04", "14", "21"])}
        radius={7}
        color="#be9600"
      />
      <Popview
        title="Popview - 2"
        className="top-[309px] left-[480px] h-[395px] w-[649px] bg-[linear-gradient(180deg,transparent_15%,rgba(220,220,220,0.8)_38%,#0a0d10_39%),linear-gradient(90deg,#707070_0%,#16181c_25%,#000408_45%,#101114_72%,#606060_88%,#707070_100%)]"
        closeClass="border-[#e8b0a8] bg-linear-to-b from-[#d88878] via-[#b83018] to-[#c85038]"
        dots={grid([246, 355, 465], [29, 138, 247], ["22"])}
        radius={19}
        color="#46b8ff"
      />
    </div>
  );
};

export default App;
